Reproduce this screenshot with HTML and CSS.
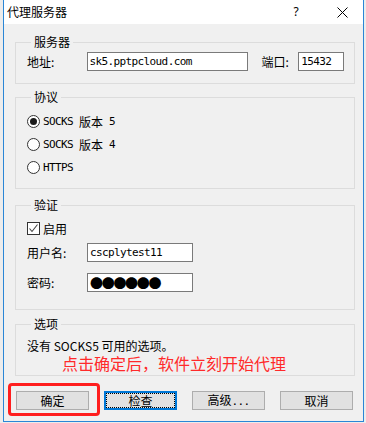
FILE: index.html
```html
<!DOCTYPE html>
<html lang="zh-CN">
<head>
    <meta charset="UTF-8">
    <title>代理服务器</title>
    <link rel="stylesheet" href="styles.css">
</head>
<body>

    <div class="dialog">
        <div class="titlebar">
            <span class="title">代理服务器</span>
            <span class="help">?</span>
            <span class="close">
                <svg width="11" height="11" viewBox="0 0 11 11"><path d="M0.5 0.5 L10.5 10.5 M10.5 0.5 L0.5 10.5" stroke="#000" stroke-width="1" fill="none"/></svg>
            </span>
        </div>

        <div class="content">
            <fieldset class="group g-server">
                <legend>服务器</legend>
                <div class="row">
                    <label class="lbl">地址:</label>
                    <div class="field w-host"><span class="en">sk5.pptpcloud.com</span></div>
                    <label class="lbl-port">端口:</label>
                    <div class="field w-port"><span class="en">15432</span></div>
                </div>
            </fieldset>

            <fieldset class="group g-proto">
                <legend>协议</legend>
                <div class="opt"><span class="radio on"></span><span class="en">SOCKS </span>版本<span class="en"> 5</span></div>
                <div class="opt"><span class="radio"></span><span class="en">SOCKS </span>版本<span class="en"> 4</span></div>
                <div class="opt"><span class="radio"></span><span class="en">HTTPS</span></div>
            </fieldset>

            <fieldset class="group g-auth">
                <legend>验证</legend>
                <div class="chk-row">
                    <span class="check"><svg width="11" height="11" viewBox="0 0 11 11"><path d="M1.5 5.5 L4 8.5 L9.5 1.5" stroke="#444" stroke-width="1.1" fill="none"/></svg></span>启用
                </div>
                <div class="row r-user">
                    <label class="lbl">用户名:</label>
                    <div class="field w-user"><span class="en">cscplytest11</span></div>
                </div>
                <div class="row r-pass">
                    <label class="lbl">密码:</label>
                    <div class="field w-user"><span class="dots">●●●●●●</span></div>
                </div>
            </fieldset>

            <fieldset class="group g-opts">
                <legend>选项</legend>
                <p class="note">没有 SOCKS5 可用的选项。</p>
            </fieldset>

            <div class="buttons">
                <button class="btn">确定</button>
                <button class="btn focus">检查</button>
                <button class="btn">高级<span class="en">...</span></button>
                <button class="btn">取消</button>
            </div>

            <!-- 标注 -->
            <div class="mark-text">点击确定后，软件立刻开始代理</div>
            <div class="mark-box"></div>
        </div>
    </div>

</body>
</html>
```

FILE: styles.css
```css
* { margin: 0; padding: 0; box-sizing: border-box; }
body { width: 366px; height: 423px; overflow: hidden; background: #ececec; font-family: "Noto Sans CJK SC", sans-serif; font-size: 12px; color: #000; }

.dialog { margin-left: 3px; width: 361px; height: 422px; background: #f0f0f0; border: 1px solid #2a86d6; border-top: none; }
.titlebar { height: 24px; background: #fff; display: flex; align-items: center; }
.title { flex: 1; padding-left: 3px; font-size: 12px; line-height: 16px; }
.help { width: 52px; text-align: center; font-family: "Noto Sans", sans-serif; font-size: 12px; line-height: 16px; }
.close { width: 41px; display: flex; justify-content: center; align-items: center; }

.content { position: relative; padding: 10px 8px 0 11px; }
.en { font-family: "DejaVu Sans Mono", monospace; font-size: 11px; letter-spacing: -0.62px; white-space: pre; }

.group { border: 1px solid #dcdcdc; padding: 0 10px 0 11px; min-width: 0; }
.group legend { margin-left: 4px; padding: 0 3px; font-size: 12px; line-height: 16px; }
.g-server { padding-top: 2px; padding-bottom: 12px; }
.g-proto { margin-top: 5px; padding-top: 5px; padding-bottom: 9px; }
.g-auth { margin-top: 8px; padding-top: 5px; padding-bottom: 17px; }
.g-opts { margin-top: 6px; padding-top: 7px; padding-bottom: 22px; }

.row { display: flex; align-items: center; }
.lbl { width: 60px; line-height: 16px; }
.lbl-port { margin-left: 14px; width: 37px; line-height: 16px; }
.field { height: 19px; border: 1px solid #7a7a7a; background: #fff; padding-left: 2px; display: flex; align-items: center; }
.w-host { width: 162px; }
.w-port { width: 46px; }
.w-user { width: 106px; }
.r-user { margin-top: 5px; }
.r-pass { margin-top: 11px; }
.dots { font-size: 13px; letter-spacing: -1.3px; line-height: 15px; }

.opt { display: flex; align-items: center; height: 23px; }
.radio { width: 13px; height: 13px; border: 1px solid #333; border-radius: 50%; background: #fff; margin-right: 3px; display: flex; align-items: center; justify-content: center; }
.radio.on::after { content: ""; width: 7px; height: 7px; border-radius: 50%; background: #1a1a1a; }

.chk-row { display: flex; align-items: center; height: 20px; }
.check { width: 13px; height: 13px; border: 1px solid #333; background: #fff; margin-right: 3px; display: flex; align-items: center; justify-content: center; }

.note { line-height: 14px; }

.buttons { display: flex; justify-content: space-between; margin-top: 15px; padding: 0 2px 0 1px; }
.btn { width: 73px; height: 19px; background: #e1e1e1; border: 1px solid #adadad; font-family: "Noto Sans CJK SC", sans-serif; font-size: 12px; color: #000; line-height: 15px; }
.btn.focus { border-color: #0078d7; box-shadow: inset 0 0 0 1px #0078d7; outline: 1px dotted #000; outline-offset: -3px; }

.mark-text { position: absolute; left: 58px; top: 331px; font-size: 16px; line-height: 16px; color: #ff2a2a; white-space: nowrap; }
.mark-box { position: absolute; left: 4px; top: 359px; width: 92px; height: 33px; border: 3px solid #ff1e1e; border-radius: 4px; pointer-events: none; }
```
